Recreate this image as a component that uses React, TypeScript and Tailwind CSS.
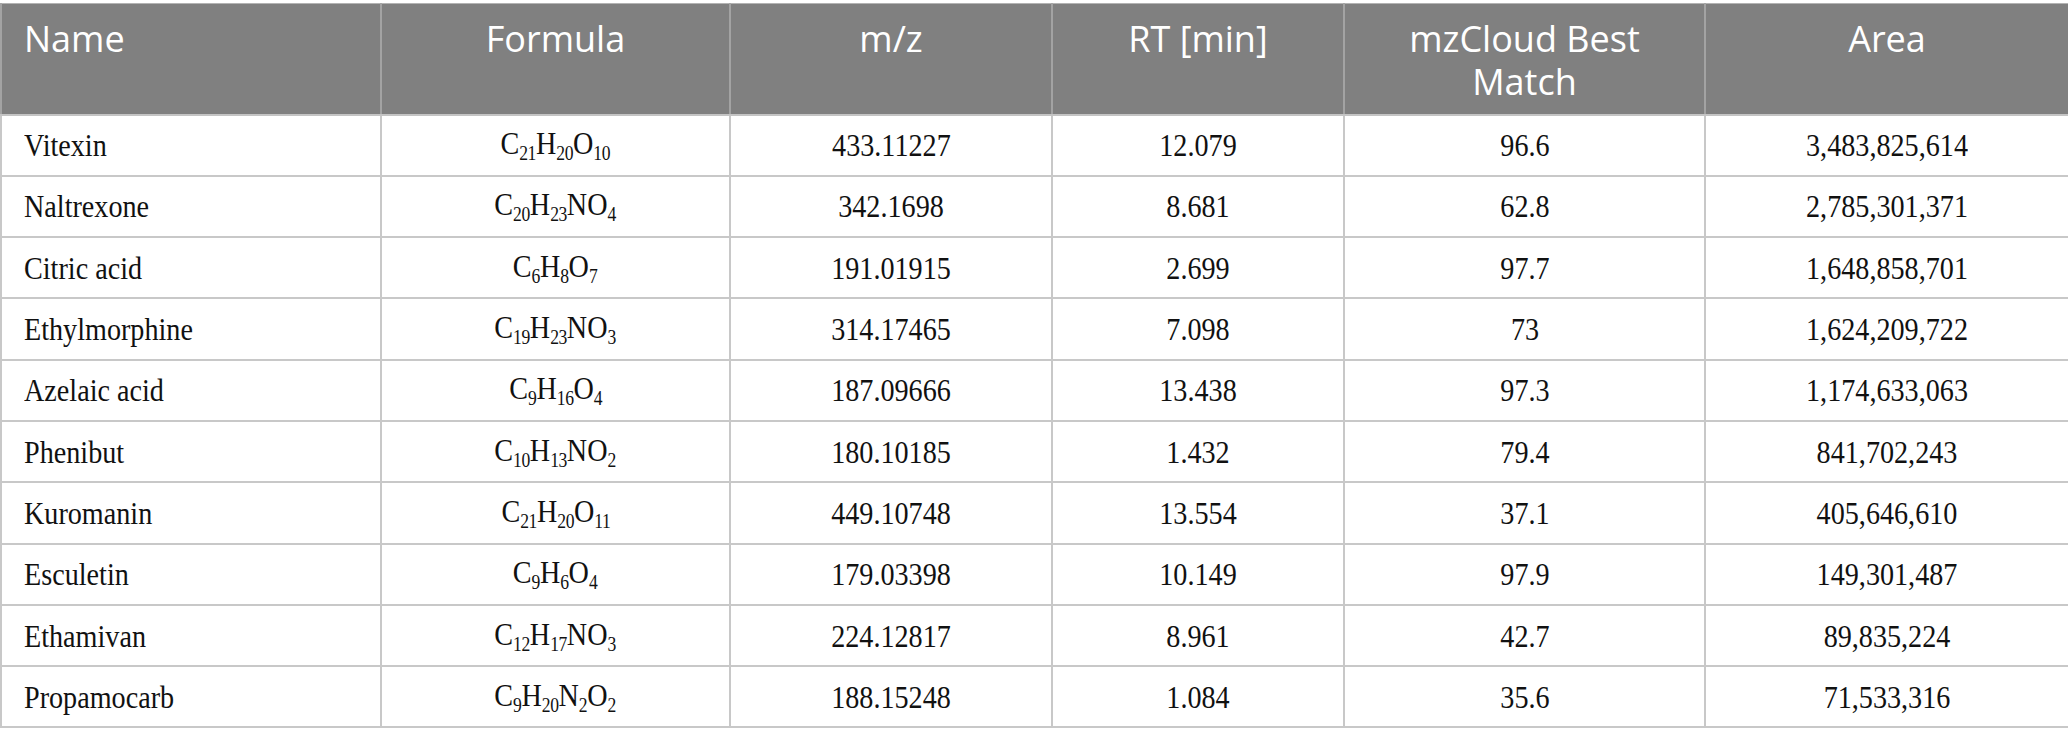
import React from "react";

type Part = { t: string; sub?: boolean };

const f = (s: string): Part[] => {
  const parts: Part[] = [];
  const re = /([A-Za-z]+)|(\d+)/g;
  let m: RegExpExecArray | null;
  while ((m = re.exec(s))) {
    if (m[1]) parts.push({ t: m[1] });
    else parts.push({ t: m[2], sub: true });
  }
  return parts;
};

const rows: [string, string, string, string, string, string][] = [
  ["Vitexin", "C21H20O10", "433.11227", "12.079", "96.6", "3,483,825,614"],
  ["Naltrexone", "C20H23NO4", "342.1698", "8.681", "62.8", "2,785,301,371"],
  ["Citric acid", "C6H8O7", "191.01915", "2.699", "97.7", "1,648,858,701"],
  ["Ethylmorphine", "C19H23NO3", "314.17465", "7.098", "73", "1,624,209,722"],
  ["Azelaic acid", "C9H16O4", "187.09666", "13.438", "97.3", "1,174,633,063"],
  ["Phenibut", "C10H13NO2", "180.10185", "1.432", "79.4", "841,702,243"],
  ["Kuromanin", "C21H20O11", "449.10748", "13.554", "37.1", "405,646,610"],
  ["Esculetin", "C9H6O4", "179.03398", "10.149", "97.9", "149,301,487"],
  ["Ethamivan", "C12H17NO3", "224.12817", "8.961", "42.7", "89,835,224"],
  ["Propamocarb", "C9H20N2O2", "188.15248", "1.084", "35.6", "71,533,316"],
];

const Formula = ({ s }: { s: string }) => (
  <span className="inline-block scale-x-[0.88] origin-center whitespace-nowrap">
    {f(s).map((p, i) =>
      p.sub ? (
        <span key={i} className="relative top-[6px] text-[20px] tracking-[-0.5px]">
          {p.t}
        </span>
      ) : (
        <span key={i}>{p.t}</span>
      )
    )}
  </span>
);

const Txt = ({ children, left }: { children: React.ReactNode; left?: boolean }) => (
  <span
    className={
      "inline-block scale-x-[0.88] whitespace-nowrap " + (left ? "origin-left" : "origin-center")
    }
  >
    {children}
  </span>
);

export default function App() {
  const th =
    "h-[111px] align-top pt-[13px] bg-[#808080] text-white font-normal text-[36px] leading-[43px] border-x-2 border-x-[#a3a3a3] border-b-2 border-b-[#c4c4c4]";
  const td =
    "h-[61.3px] align-middle text-center border-2 border-[#c8c8c8] text-[32px] leading-[36px] text-[#111]";
  return (
    <div className="w-[2068px] h-[747px] bg-white pt-[3px]">
      <table
        className="w-[2068px] table-fixed border-collapse border-t border-t-[#b3b3b3]"
        style={{ fontFamily: '"Liberation Serif", "Times New Roman", serif' }}
      >
        <colgroup>
          <col className="w-[380px]" />
          <col className="w-[349px]" />
          <col className="w-[322px]" />
          <col className="w-[292px]" />
          <col className="w-[361px]" />
          <col className="w-[364px]" />
        </colgroup>
        <thead style={{ fontFamily: '"Open Sans", "Noto Sans", sans-serif' }}>
          <tr>
            <th className={th + " text-left pl-[22px]"}>Name</th>
            <th className={th + " text-center"}>Formula</th>
            <th className={th + " text-center"}>m/z</th>
            <th className={th + " text-center"}>RT [min]</th>
            <th className={th + " text-center px-[20px]"}>mzCloud Best Match</th>
            <th className={th + " text-center"}>Area</th>
          </tr>
        </thead>
        <tbody>
          {rows.map((r) => (
            <tr key={r[0]} className="h-[61.3px]">
              <td className={td + " text-left pl-[22px]"}>
                <Txt left>{r[0]}</Txt>
              </td>
              <td className={td}>
                <Formula s={r[1]} />
              </td>
              <td className={td}>
                <Txt>{r[2]}</Txt>
              </td>
              <td className={td}>
                <Txt>{r[3]}</Txt>
              </td>
              <td className={td}>
                <Txt>{r[4]}</Txt>
              </td>
              <td className={td}>
                <Txt>{r[5]}</Txt>
              </td>
            </tr>
          ))}
        </tbody>
      </table>
    </div>
  );
}
